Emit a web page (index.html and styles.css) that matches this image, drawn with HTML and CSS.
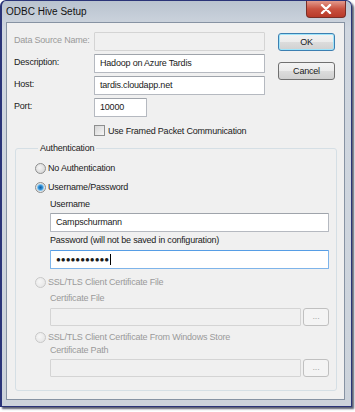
FILE: index.html
```html
<html>
    <head>
        <link rel="stylesheet" href="styles.css">
        <title>ODBC Hive Setup</title>
    </head>
    <body>
        <div class="window">
            <div class="titlebar">
                <span class="title">ODBC Hive Setup</span>
                <span class="close">
                    <svg width="12" height="10" viewBox="0 0 12 10">
                        <path d="M2 1 L10 9 M10 1 L2 9" stroke="#ffffff" stroke-width="2.4" stroke-linecap="round"/>
                    </svg>
                </span>
            </div>
            <div class="client">
                <div class="top">
                    <div class="fields">
                        <label class="lbl disabled">Data Source Name:</label>
                        <div class="input disabled-box"></div>
                        <label class="lbl">Description:</label>
                        <div class="input">Hadoop on Azure Tardis</div>
                        <label class="lbl">Host:</label>
                        <div class="input">tardis.cloudapp.net</div>
                        <label class="lbl">Port:</label>
                        <div class="input port">10000</div>
                    </div>
                    <div class="buttons">
                        <div class="button default">OK</div>
                        <div class="button">Cancel</div>
                    </div>
                </div>
                <div class="check-row">
                    <span class="checkbox"></span>
                    <span>Use Framed Packet Communication</span>
                </div>
                <fieldset class="group">
                    <legend>Authentication</legend>
                    <div class="radio-row first">
                        <span class="radio"></span>
                        <span>No Authentication</span>
                    </div>
                    <div class="radio-row">
                        <span class="radio checked"></span>
                        <span>Username/Password</span>
                    </div>
                    <div class="sub">
                        <div class="sub-label">Username</div>
                        <div class="input wide">Campschurmann</div>
                        <div class="sub-label tight">Password (will not be saved in configuration)</div>
                        <div class="input wide focused"><span class="dots">&#9679;&#9679;&#9679;&#9679;&#9679;&#9679;&#9679;&#9679;&#9679;&#9679;&#9679;</span><span class="caret"></span></div>
                    </div>
                    <div class="radio-row disabled">
                        <span class="radio off"></span>
                        <span>SSL/TLS Client Certificate File</span>
                    </div>
                    <div class="sub">
                        <div class="sub-label disabled lead">Certificate File</div>
                        <div class="browse-row loose">
                            <div class="input disabled-box grow"></div>
                            <div class="small-button">...</div>
                        </div>
                    </div>
                    <div class="radio-row disabled near">
                        <span class="radio off"></span>
                        <span>SSL/TLS Client Certificate From Windows Store</span>
                    </div>
                    <div class="sub">
                        <div class="sub-label disabled close-top">Certificate Path</div>
                        <div class="browse-row">
                            <div class="input disabled-box grow"></div>
                            <div class="small-button">...</div>
                        </div>
                    </div>
                </fieldset>
            </div>
        </div>
    </body>
</html>
```
FILE: styles.css
```css
body {
    margin: 0;
    background-color: #ffffff;
    font-family: "Liberation Sans", Arial, sans-serif;
    font-size: 9px;
    letter-spacing: -0.2px;
    color: #1a1a1a;
}
.window {
    width: 349px;
    height: 405px;
    border: 1px solid #2a3478;
    border-left-width: 2px;
    border-radius: 6px 6px 0 0;
    background: linear-gradient(#b9c3cf, #d0d7e0 28px, #ccd3db);
    box-shadow: 2px 2px 2px #5a5e70;
    display: flex;
    flex-direction: column;
}
.titlebar {
    height: 21px;
    display: flex;
    align-items: center;
    padding-left: 4px;
}
.title {
    font-size: 10px;
    letter-spacing: 0;
    color: #111111;
}
.close {
    margin-left: auto;
    margin-right: 5px;
    align-self: flex-start;
    width: 38px;
    height: 16px;
    border: 1px solid #7a2e26;
    border-top: none;
    border-radius: 0 0 4px 4px;
    background: linear-gradient(#e39a8c, #c9513f 50%, #b83a29);
    display: flex;
    align-items: center;
    justify-content: center;
}
.client {
    flex: 1;
    margin: 0 6px 6px 4px;
    border: 1px solid #8793a3;
    background-color: #f0f0f0;
    padding: 9px 0 0 7px;
}
.top {
    display: flex;
}
.fields {
    display: grid;
    grid-template-columns: 80px 171px;
    grid-auto-rows: 19px;
    row-gap: 3px;
}
.lbl {
    padding-top: 3px;
}
.disabled {
    color: #9a9a9a;
}
.input {
    box-sizing: border-box;
    height: 19px;
    border: 1px solid #b5b9c0;
    border-top-color: #9fa4ab;
    background-color: #ffffff;
    padding: 3px 5px 0 5px;
    border-radius: 1px;
}
.disabled-box {
    background-color: #f0f0f0;
    border-color: #d4d4d4;
}
.port {
    width: 53px;
}
.buttons {
    margin-left: 13px;
    padding-top: 1px;
    display: flex;
    flex-direction: column;
    gap: 11px;
}
.button {
    box-sizing: border-box;
    width: 57px;
    height: 18px;
    border: 1px solid #707070;
    border-radius: 3px;
    background: linear-gradient(#f3f3f3, #ebebeb 50%, #dcdcdc 51%, #d0d0d0);
    text-align: center;
    line-height: 16px;
}
.default {
    border-color: #3c7fb1;
    box-shadow: inset 0 0 0 1px #9fe4fa;
}
.check-row {
    display: flex;
    align-items: center;
    gap: 3px;
    margin: 8px 0 0 80px;
}
.checkbox {
    width: 9px;
    height: 9px;
    border: 1px solid #8e8f8f;
    background: linear-gradient(135deg, #d6d6d6, #f6f6f6);
}
.group {
    margin: 7px 7px 0 1px;
    border: 1px solid #d5dfe5;
    border-radius: 3px;
    padding: 4px 0 13px 19px;
}
.group legend {
    padding: 0 2px;
    margin-left: 3px;
    height: 10px;
    line-height: 10px;
}
.radio-row {
    display: flex;
    align-items: center;
    gap: 2px;
    height: 12px;
    margin-top: 7px;
}
.radio-row.first {
    margin-top: 5px;
}
.radio-row.near {
    margin-top: 5px;
}
.radio {
    box-sizing: border-box;
    width: 11px;
    height: 11px;
    border-radius: 50%;
    border: 1px solid #8e8f8f;
    background: radial-gradient(circle at 40% 40%, #f4f4f4, #cfcfcf);
}
.radio.checked {
    background: radial-gradient(circle, #1a5c9e 0, #2f8fd6 2px, #7ec2ee 3px, #e6e6e6 4px, #cfcfcf);
}
.radio.off {
    border-color: #c8c8c8;
    background: radial-gradient(circle at 40% 40%, #f6f6f6, #e2e2e2);
}
.sub {
    padding-left: 15px;
    padding-right: 7px;
}
.sub-label {
    margin-top: 5px;
    height: 12px;
    line-height: 12px;
}
.sub-label.tight {
    margin-top: 2px;
}
.sub-label.lead {
    margin-top: 4px;
}
.sub-label.close-top {
    margin-top: 1px;
}
.wide {
    margin-top: 3px;
}
.focused {
    margin-top: 4px;
    border-color: #7eb4ea;
    border-top-color: #569de5;
}
.dots {
    font-size: 8px;
    letter-spacing: 0;
    line-height: 12px;
    vertical-align: top;
}
.caret {
    display: inline-block;
    width: 1px;
    height: 11px;
    background-color: #000000;
    vertical-align: top;
    margin-left: 1px;
}
.browse-row {
    display: flex;
    gap: 2px;
    margin-top: 3px;
}
.browse-row.loose {
    margin-top: 4px;
}
.browse-row .input {
    height: 18px;
}
.grow {
    flex: 1;
}
.small-button {
    box-sizing: border-box;
    width: 26px;
    height: 18px;
    border: 1px solid #c0c0c0;
    border-radius: 3px;
    background-color: #f4f4f4;
    color: #a8a8a8;
    text-align: center;
    line-height: 14px;
}
```
